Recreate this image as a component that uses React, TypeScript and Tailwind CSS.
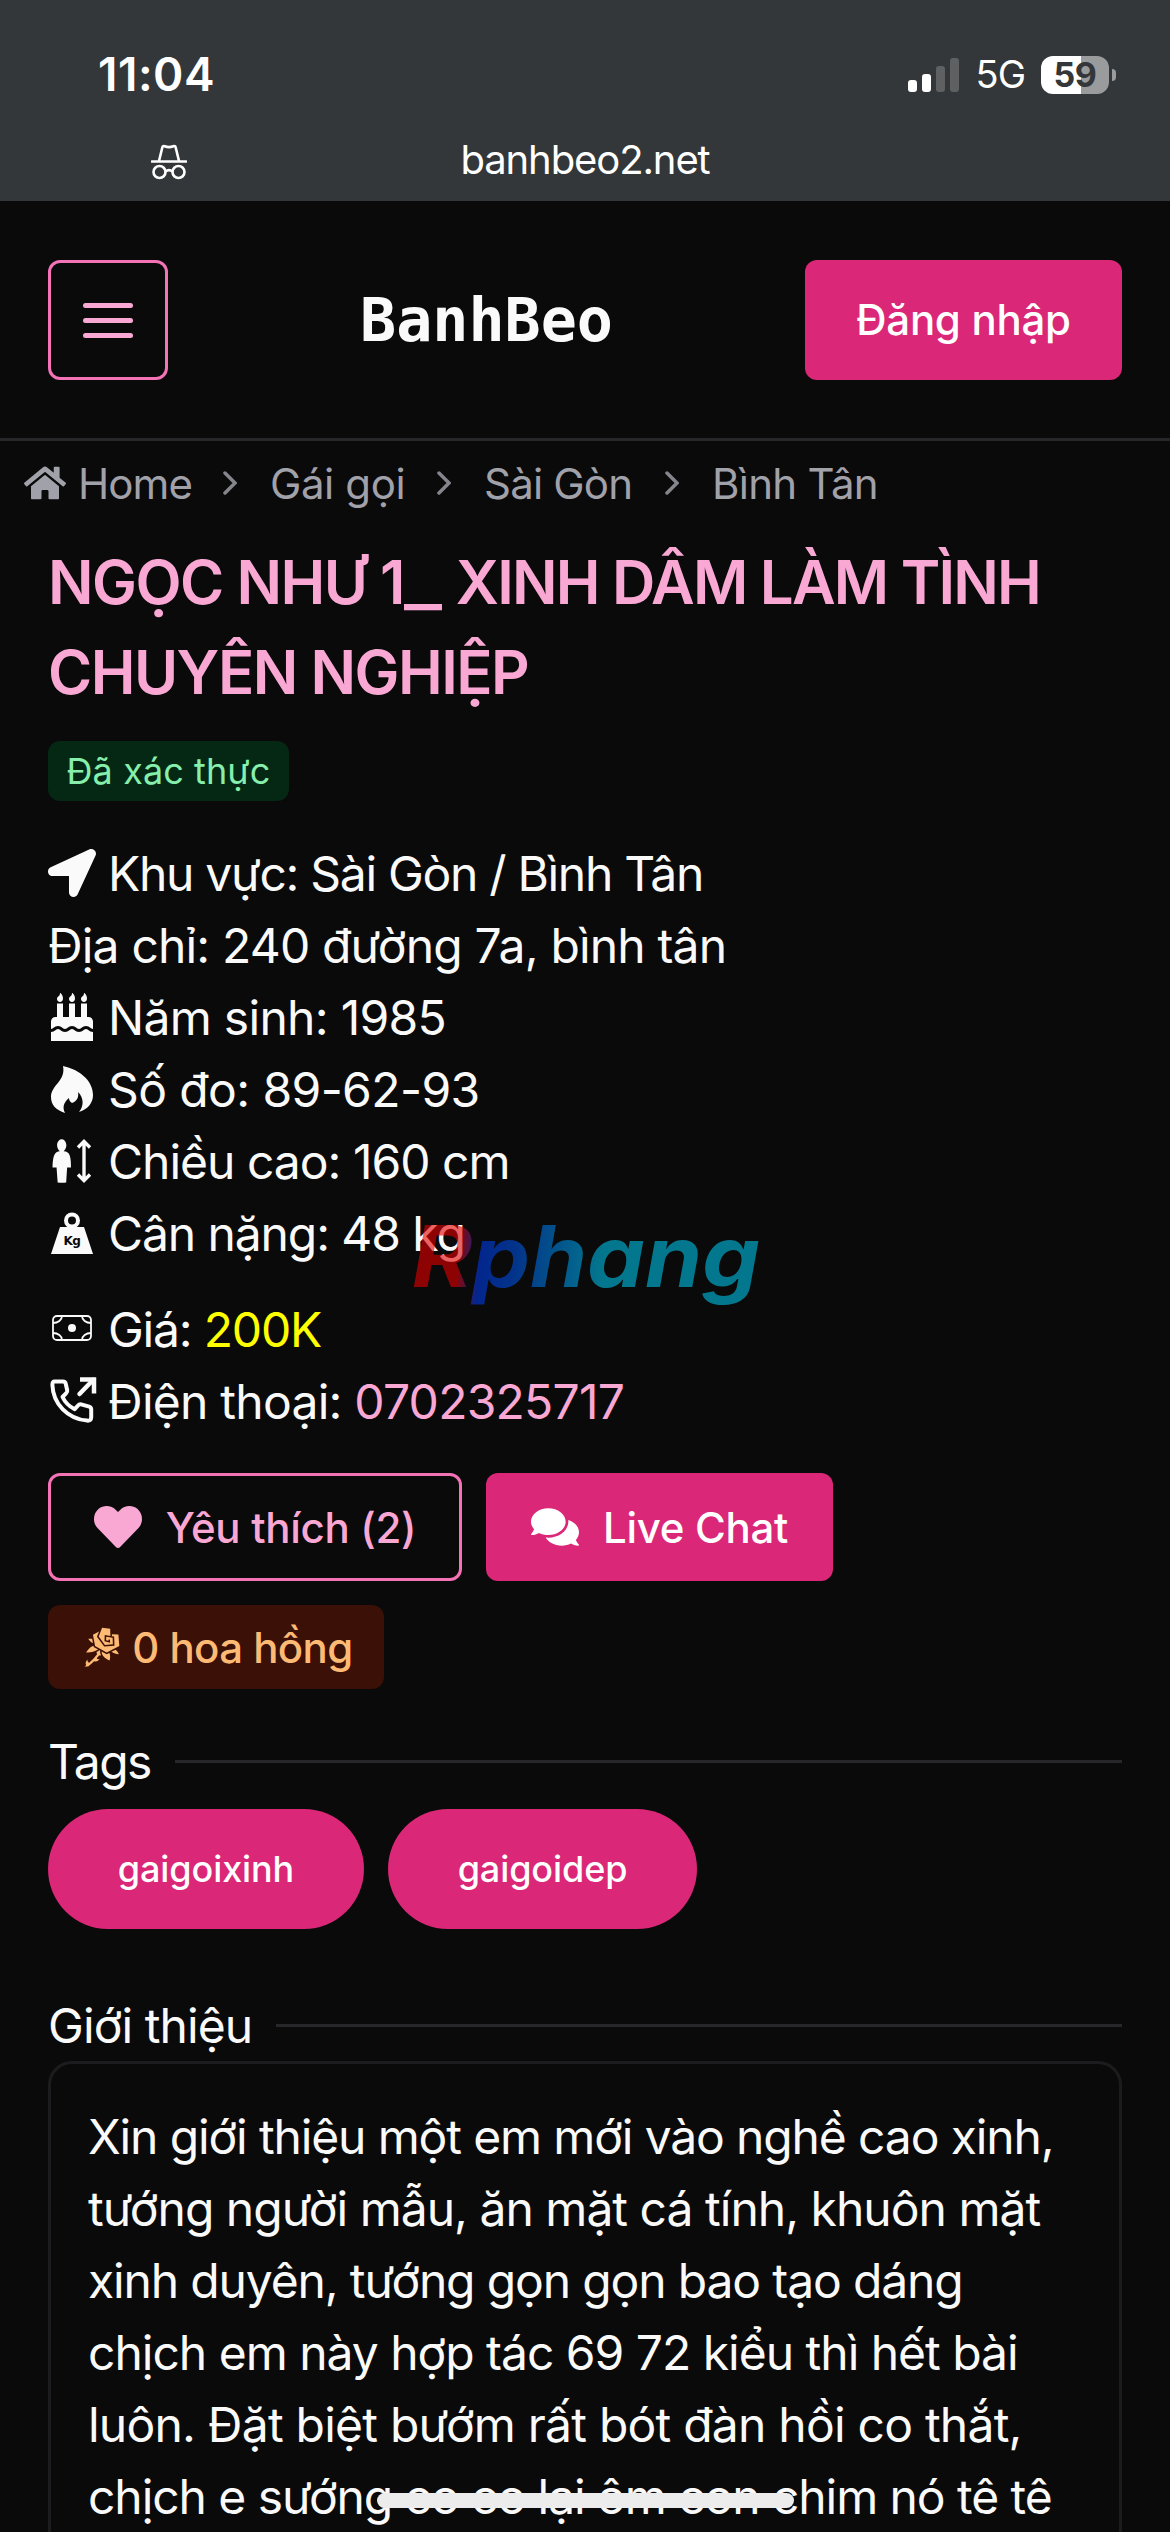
import type { ReactNode } from 'react';
import { FaBirthdayCake, FaComments, FaHeart, FaHome, FaLocationArrow } from 'react-icons/fa';
import { GiBodyHeight, GiRose } from 'react-icons/gi';

const crumbs = [
  { label: 'Gái gọi', className: 'w-[136px] tracking-[-0.4px]' },
  { label: 'Sài Gòn', className: 'w-[150px] tracking-[-0.8px]' },
  { label: 'Bình Tân', className: 'w-[170px] tracking-[-0.7px]' },
];

const description = [
  { text: 'Xin giới thiệu một em mới vào nghề cao xinh,', className: 'tracking-[-1.13px]' },
  { text: 'tướng người mẫu, ăn mặt cá tính, khuôn mặt', className: 'tracking-[-0.98px]' },
  { text: 'xinh duyên, tướng gọn gọn bao tạo dáng', className: 'tracking-[-1.14px]' },
  { text: 'chịch em này hợp tác 69 72 kiểu thì hết bài', className: 'tracking-[-1.01px]' },
  { text: 'luôn. Đặt biệt bướm rất bót đàn hồi co thắt,', className: 'tracking-[-0.77px]' },
  { text: 'chịch e sướng co co lại ôm con chim nó tê tê', className: 'tracking-[-1.07px]' },
];

function Incognito() {
  return (
    <svg className="h-9 w-9" viewBox="0 0 36 36" fill="none" stroke="white" strokeWidth="2.6">
      <path d="M8 17 11.3 3.5c.3-1.3 1.3-1.8 2.4-1.3 2.8 1.2 5.8 1.2 8.6 0 1.1-.5 2.1 0 2.4 1.3L28 17" />
      <path d="M1 17.5h34" strokeLinecap="round" />
      <circle cx="8.5" cy="28" r="6" />
      <circle cx="27.5" cy="28" r="6" />
      <path d="M14.5 27.5c2-1.5 5-1.5 7 0" />
    </svg>
  );
}

function Flame() {
  return (
    <svg className="h-12 w-12" viewBox="0 0 48 48" fill="currentColor">
      <path d="M15 1c14 3 30 13 30 29 0 8-5 14-14 17 5-6 5-14-1-20 1 5-1 9-6 11-2-1-3-3-3-5-5 4-7 9-4 15C8 45 3 40 3 32 3 20 18 16 15 1Z" />
    </svg>
  );
}

function Weight() {
  return (
    <svg className="h-12 w-12" viewBox="0 0 48 48" fill="currentColor">
      <circle cx="24" cy="11.5" r="6" fill="none" stroke="currentColor" strokeWidth="4" />
      <path d="M12 18h24l9 27H3Z" />
      <text x="24" y="36" textAnchor="middle" fontSize="12" fontWeight="700" fill="#0a0a0a" fontFamily="DejaVu Sans, sans-serif">
        Kg
      </text>
    </svg>
  );
}

function Banknote() {
  return (
    <svg className="h-12 w-12" viewBox="0 0 48 48" fill="none" stroke="currentColor" strokeWidth="1.8">
      <rect x="5" y="11" width="38" height="24" rx="4" />
      <circle cx="24" cy="23" r="4" fill="currentColor" stroke="none" />
      <path d="M14 11c0 4-4 7-9 7M34 11c0 4 4 7 9 7M14 35c0-4-4-7-9-7M34 35c0-4 4-7 9-7" />
    </svg>
  );
}

function PhoneOutgoing() {
  return (
    <svg className="h-12 w-12 overflow-visible" viewBox="0 0 48 48" fill="none" stroke="currentColor" strokeWidth="4" strokeLinejoin="round">
      <path d="M6.5 4.5H15c1.5 0 2.4.8 2.7 2.2l1.5 6.5c.3 1.3-.2 2.3-1.2 3.2L14.5 20c2.5 5.2 7 9.700 12.200 12.200l3.300-3.700c.9-1 2-1.400 3.200-1.100l8 2.200c1.300.4 2 1.300 2 2.600v8c0 2.500-1.500 3.700-4 3.400C20 42 5 27 4.400 8c0-2.200.4-3.500 2.100-3.500Z" />
      <path d="M31.5 17 45 3" strokeWidth="4.5" strokeLinecap="round" />
      <path d="M32 2.5h14v14" strokeWidth="4.5" strokeLinejoin="miter" />
    </svg>
  );
}

function Watermark() {
  return (
    <svg className="absolute top-[1205px] left-[400px] h-[120px] w-[380px]" viewBox="0 0 380 120" opacity="0.6">
      <defs>
        <linearGradient id="brand" gradientUnits="userSpaceOnUse" x1="8" y1="60" x2="360" y2="85">
          <stop offset="0.14" stopColor="#e50000" />
          <stop offset="0.2" stopColor="#0039e6" />
          <stop offset="0.3" stopColor="#0050e0" />
          <stop offset="0.55" stopColor="#00c0e6" />
        </linearGradient>
      </defs>
      <text
        x="12"
        y="82"
        textLength="348"
        lengthAdjust="spacingAndGlyphs"
        fontFamily="Inter, sans-serif"
        fontSize="85"
        fontStyle="italic"
        fontWeight="700"
        fill="url(#brand)"
      >
        Rphang
      </text>
    </svg>
  );
}

function StatusBar() {
  return (
    <div className="h-[201px] bg-[#333739] text-white">
      <div className="flex h-[136px] items-center justify-between pt-[13px] pr-[54px] pl-[98px]">
        <span className="text-[46px] font-semibold tracking-[0.5px]">11:04</span>
        <div className="flex items-center">
          <div className="mr-[17px] flex h-[34px] items-end gap-[5px]">
            <i className="h-3 w-[9px] rounded-[3px] bg-white" />
            <i className="h-[18px] w-[9px] rounded-[3px] bg-white" />
            <i className="h-[26px] w-[9px] rounded-[3px] bg-[#5e6062]" />
            <i className="h-[34px] w-[9px] rounded-[3px] bg-[#5e6062]" />
          </div>
          <span className="mr-4 text-[38px] tracking-[-1px]">5G</span>
          <div className="flex h-[38px] w-[68px] items-center justify-center rounded-[12px] bg-linear-to-r from-white from-59% to-[#9a9b9d] to-59% text-[34px] font-bold tracking-[-0.5px] text-[#333739]">
            59
          </div>
          <i className="ml-[3px] h-3 w-1 rounded-r-full bg-[#9a9b9d]" />
        </div>
      </div>
      <div className="grid h-12 grid-cols-[1fr_auto_1fr] items-center">
        <div className="pt-1 pl-[151px]">
          <Incognito />
        </div>
        <span className="text-[40px] leading-[48px] tracking-[-1.1px]">banhbeo2.net</span>
      </div>
    </div>
  );
}

function Header() {
  return (
    <header className="flex h-60 items-center justify-between border-b-3 border-[#27272a] px-12">
      <button className="flex h-[120px] w-[120px] flex-col items-center justify-center gap-[10px] rounded-xl border-3 border-[#f472b6] pt-0.5">
        <i className="h-[5px] w-[50px] rounded-full bg-[#f9a8d4]" />
        <i className="h-[5px] w-[50px] rounded-full bg-[#f9a8d4]" />
        <i className="h-[5px] w-[50px] rounded-full bg-[#f9a8d4]" />
      </button>
      <span className="font-['DejaVu_Sans_Mono',monospace] text-[60px] font-bold">BanhBeo</span>
      <button className="h-[120px] w-[317px] rounded-xl bg-[#db2777] text-[42px] font-medium tracking-[-0.3px] text-white">
        Đăng nhập
      </button>
    </header>
  );
}

function Breadcrumb() {
  return (
    <nav className="flex h-[84px] items-center pl-6 text-[42px] whitespace-nowrap text-[#a1a1aa]">
      <FaHome className="h-[42px] w-[42px]" />
      <span className="ml-3 w-[114px] tracking-[-0.9px]">Home</span>
      {crumbs.map((crumb) => (
        <div key={crumb.label} className="flex items-center">
          <svg className="mr-[33px] ml-[31px] h-6 w-[14px]" viewBox="0 0 14 24" fill="none" stroke="#85858d" strokeWidth="3.5" strokeLinecap="round">
            <path d="m2 2 10 10L2 22" />
          </svg>
          <span className={crumb.className}>{crumb.label}</span>
        </div>
      ))}
    </nav>
  );
}

function Row({ icon, className, children }: { icon?: ReactNode; className: string; children: ReactNode }) {
  return (
    <div className="flex h-[72px] items-center whitespace-nowrap">
      {icon && <span className="mr-3 -mt-0.5">{icon}</span>}
      <span className={className}>{children}</span>
    </div>
  );
}

function SectionTitle({ className, children }: { className: string; children: ReactNode }) {
  return (
    <div className="flex h-[72px] items-center gap-6">
      <h2 className={`pt-0.5 whitespace-nowrap ${className}`}>{children}</h2>
      <div className="h-[3px] flex-1 bg-[#27272a]" />
    </div>
  );
}

export default function App() {
  return (
    <div className="relative h-[2532px] w-[1170px] overflow-hidden bg-[#0a0a0a] font-[Inter,'Noto_Sans',sans-serif] text-[#fafafa]">
      <StatusBar />
      <Header />
      <Breadcrumb />

      <main className="px-12 text-[48px] tracking-[-0.5px]">
        <h1 className="pt-3 text-[60px] leading-[90px] font-semibold tracking-[-1.5px] whitespace-nowrap text-[#f9a8d4]">
          NGỌC NHƯ 1<span className="mr-[12px] inline-block origin-left scale-x-135">_</span>
          <span className="tracking-[-1.8px]"> XINH DÂM LÀM TÌNH</span>
          <br />
          CHUYÊN NGHIỆP
        </h1>
        <div className="mt-6 flex h-[60px] w-[241px] items-center justify-center rounded-xl bg-[#052814] text-[36px] text-[#86efac]">
          <span className="tracking-[0.1px]">Đã xác thực</span>
        </div>

        <div className="mt-[37px]">
          <Row icon={<FaLocationArrow className="h-12 w-12" />} className="tracking-[-1.3px]">
            Khu vực: Sài Gòn / Bình Tân
          </Row>
          <Row className="tracking-[-0.83px]">Địa chỉ: 240 đường 7a, bình tân</Row>
          <Row icon={<FaBirthdayCake className="h-12 w-12" />} className="tracking-[-0.7px]">
            Năm sinh: 1985
          </Row>
          <Row icon={<Flame />} className="tracking-[-0.6px]">
            Số đo: 89-62-93
          </Row>
          <Row icon={<GiBodyHeight className="h-12 w-12" />} className="tracking-[-1px]">
            Chiều cao: 160 cm
          </Row>
          <Row icon={<Weight />} className="tracking-[-1.1px]">
            Cân nặng: 48 kg
          </Row>
        </div>
        <div className="mt-6">
          <Row icon={<Banknote />} className="tracking-[-1.2px]">
            Giá: <span className="text-[#ffff00]">200K</span>
          </Row>
          <Row icon={<PhoneOutgoing />} className="tracking-[-0.75px]">
            Điện thoại: <span className="text-[#f9a8d4]">0702325717</span>
          </Row>
        </div>

        <div className="mt-[35px] flex gap-6 text-[42px] font-medium tracking-[-0.3px]">
          <button className="flex h-[108px] w-[414px] items-center justify-center gap-6 rounded-xl border-3 border-[#f472b6] text-[#f9a8d4]">
            <FaHeart className="h-12 w-12" />
            Yêu thích (2)
          </button>
          <button className="flex h-[108px] w-[347px] items-center justify-center gap-6 rounded-xl bg-[#db2777] text-white">
            <FaComments className="h-12 w-12" />
            Live Chat
          </button>
        </div>
        <div className="mt-6 flex h-[84px] w-[336px] items-center justify-center gap-[11px] rounded-xl bg-[#3b1006] text-[42px] font-medium tracking-[-0.6px] text-[#fdba74]">
          <GiRose className="h-[42px] w-[42px]" />0 hoa hồng
        </div>

        <div className="mt-9">
          <SectionTitle className="tracking-[-1.6px]">Tags</SectionTitle>
          <div className="mt-3 flex gap-6 text-[36px] font-medium tracking-[-0.1px] text-white">
            <a className="flex h-[120px] w-[316px] items-center justify-center rounded-full bg-[#db2777]">gaigoixinh</a>
            <a className="flex h-[120px] w-[309px] items-center justify-center rounded-full bg-[#db2777]">gaigoidep</a>
          </div>
        </div>

        <div className="mt-[60px]">
          <SectionTitle className="tracking-[-0.9px]">Giới thiệu</SectionTitle>
          <div className="h-[600px] rounded-3xl border-3 border-[#1c1c1e] px-[37px] pt-[37px]">
            {description.map((line) => (
              <p key={line.text} className={`leading-[72px] whitespace-nowrap ${line.className}`}>
                {line.text}
              </p>
            ))}
          </div>
        </div>
      </main>

      <Watermark />
      <div className="absolute top-[2493px] left-[377px] h-[15px] w-[417px] rounded-full bg-[#ececec]" />
    </div>
  );
}
